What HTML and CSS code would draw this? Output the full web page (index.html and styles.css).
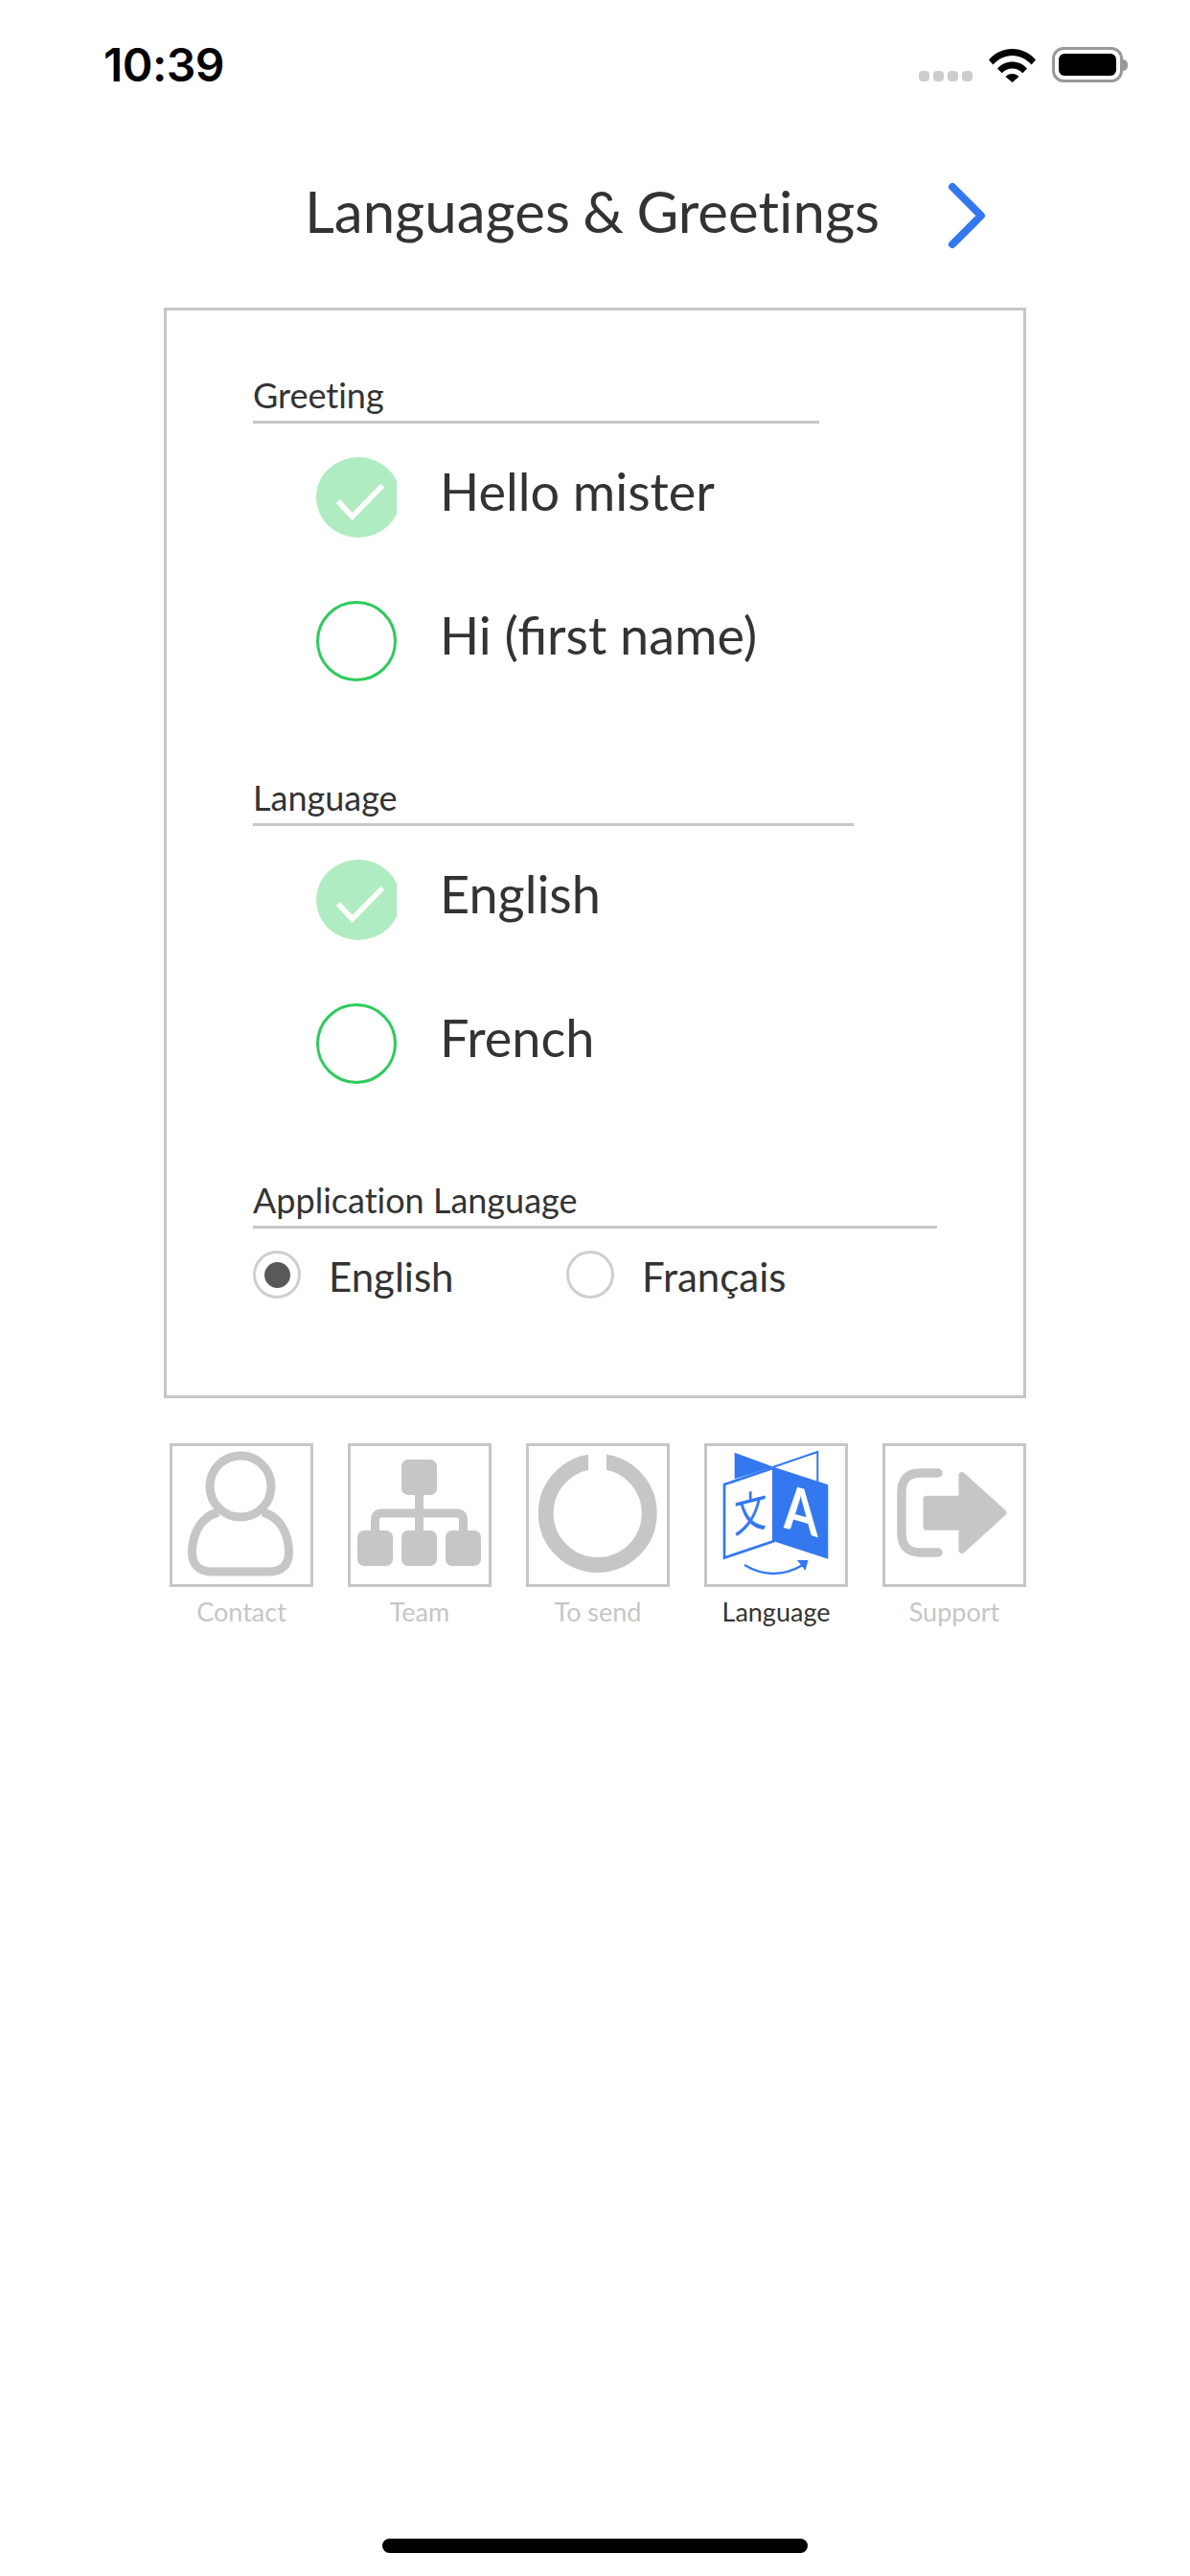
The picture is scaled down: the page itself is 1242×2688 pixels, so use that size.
FILE: index.html
```html
<!DOCTYPE html>
<html lang="en">
<head>
<meta charset="utf-8">
<title>Languages &amp; Greetings</title>
<link rel="stylesheet" href="styles.css">
</head>
<body>
<div class="screen">
  <header class="status">
    <span class="time">10:39</span>
    <div class="status-icons">
      <div class="signal"><i></i><i></i><i></i><i></i></div>
      <svg class="wifi" width="49" height="36" viewBox="0 0 49 36"><path d="M0 12.500C6.500 5 15 1 24.500 1S42.500 5 49 12.500L44.500 17.500C39 11.500 32 8 24.500 8S10 11.500 4.500 17.500Z"/><path d="M9 21.500C13 17 18.500 14.500 24.500 14.500S36 17 40 21.500L35.300 26.300C32.500 23.300 28.700 21.500 24.500 21.500S16.500 23.300 13.700 26.300Z"/><path d="M17.500 30C19.300 28.200 21.800 27 24.500 27S29.700 28.200 31.500 30L24.500 36Z"/></svg>
      <div class="battery"><div class="battery-level"></div></div>
    </div>
  </header>

  <div class="title-row">
    <h1 class="title">Languages &amp; Greetings</h1>
    <svg class="chevron" width="46" height="70" viewBox="0 0 46 70"><path d="M8 5L38 35L8 65" /></svg>
  </div>

  <main class="card">
    <section class="group">
      <h2 class="group-label rule-greeting">Greeting</h2>
      <div class="option">
        <svg class="check" width="84" height="84" viewBox="0 0 84 84"><ellipse class="check-disc" cx="44" cy="42" rx="44" ry="42"/><path class="check-mark" d="M22.700 46L37.700 62L69.300 29.700"/></svg>
        <span class="option-text">Hello mister</span>
      </div>
      <div class="option">
        <span class="ring"></span>
        <span class="option-text">Hi (first name)</span>
      </div>
    </section>
    <section class="group">
      <h2 class="group-label rule-language">Language</h2>
      <div class="option">
        <svg class="check" width="84" height="84" viewBox="0 0 84 84"><ellipse class="check-disc" cx="44" cy="42" rx="44" ry="42"/><path class="check-mark" d="M22.700 46L37.700 62L69.300 29.700"/></svg>
        <span class="option-text">English</span>
      </div>
      <div class="option">
        <span class="ring"></span>
        <span class="option-text">French</span>
      </div>
    </section>
    <section class="group-app">
      <h2 class="group-label rule-app">Application Language</h2>
      <div class="radios">
        <div class="radio-item radio-item-first"><span class="radio radio-on"></span><span class="radio-text">English</span></div>
        <div class="radio-item"><span class="radio"></span><span class="radio-text">Français</span></div>
      </div>
    </section>
  </main>

  <nav class="tabs">
    <div class="tab">
      <div class="tab-box">
        <svg class="tab-icon" viewBox="0 0 144 144"><g class="gray-stroke"><circle cx="71" cy="42" r="32"/><path d="M48 69C31 73 20.500 90 20.500 111C20.500 124 28 131 41 131H101C114 131 121.500 124 121.500 111C121.500 90 111 73 94 69"/></g></svg>
      </div>
      <span class="tab-label">Contact</span>
    </div>
    <div class="tab">
      <div class="tab-box">
        <svg class="tab-icon" viewBox="0 0 144 144"><g class="gray-fill"><rect x="53" y="14" width="37" height="37" rx="7"/><rect x="7" y="88" width="37" height="37" rx="7"/><rect x="53" y="88" width="37" height="37" rx="7"/><rect x="99" y="88" width="37" height="37" rx="7"/></g><path class="gray-stroke" d="M25.500 90V77Q25.500 70 32.500 70H110.500Q117.500 70 117.500 77V90M71.500 50V90"/></svg>
      </div>
      <span class="tab-label">Team</span>
    </div>
    <div class="tab">
      <div class="tab-box">
        <svg class="tab-icon" viewBox="0 0 144 144"><circle class="ring-icon" cx="71.700" cy="70" r="54"/><rect class="ring-gap" x="62" y="2" width="19" height="32"/></svg>
      </div>
      <span class="tab-label">To send</span>
    </div>
    <div class="tab tab-active">
      <div class="tab-box">
        <svg class="tab-icon" viewBox="0 0 144 144">
          <path class="blue-fill" d="M28.700 6.700L69.300 21.700L28.700 34.300Z"/>
          <path class="blue-thin" d="M69.300 21.700L115.300 6V38"/>
          <path class="blue-line" d="M18 40L69.300 22.700V99.300L18 116.500Z"/>
          <path class="blue-fill" d="M69.300 21.700L126.300 40.300V117.700L69.300 99.300Z"/>
          <text class="glyph-cjk" transform="translate(28 91) skewY(-14) scale(.95 1.300)" x="0" y="0">文</text>
          <text class="glyph-a" transform="translate(80 85) skewY(16) scale(.8 1)" x="0" y="0">A</text>
          <path class="blue-arrow" d="M39 124Q69 142 100 124"/>
          <path class="blue-fill" d="M94 119L105.500 119L102.500 130Z"/>
        </svg>
      </div>
      <span class="tab-label">Language</span>
    </div>
    <div class="tab">
      <div class="tab-box">
        <svg class="tab-icon" viewBox="0 0 144 144"><path class="bracket" d="M55 28H37Q17 28 17 48V91Q17 111 37 111H55"/><path class="support-arrow" d="M43 55.200H80V30.500L123 69.500L80 108.500V84.200H43Z"/></svg>
      </div>
      <span class="tab-label">Support</span>
    </div>
  </nav>

  <div class="home-bar"></div>
</div>
</body>
</html>
```

FILE: styles.css
```css
* { box-sizing: border-box; }
html, body { margin: 0; padding: 0; background: #fff; }
body { font-family: "Lato", "Noto Sans", sans-serif; color: #333; }
.screen { width: 1242px; height: 2688px; display: flex; flex-direction: column; }

.status { height: 190px; padding: 44px 70px 0 108px; display: flex; justify-content: space-between; align-items: flex-start; flex: none; }
.time { font-family: "Inter", "Liberation Sans", sans-serif; font-weight: 600; font-size: 48px; line-height: 48px; color: #000; letter-spacing: -0.5px; }
.status-icons { display: flex; align-items: flex-start; padding-top: 5px; }
.signal { display: flex; gap: 4px; margin-top: 25px; margin-right: 17px; }
.signal i { display: block; width: 11px; height: 11px; border-radius: 4px; background: #cdcdcd; }
.wifi { display: block; margin-top: 1px; fill: #000; margin-right: 17px; }
.battery { position: relative; width: 74px; height: 37px; border: 3px solid #999; border-radius: 12px; padding: 4px; }
.battery::after { content: ""; position: absolute; right: -8px; top: 10px; width: 5px; height: 12px; background: #999; border-radius: 0 6px 6px 0; }
.battery-level { width: 100%; height: 100%; background: #000; border-radius: 6px; }

.title-row { height: 70px; padding-left: 318px; display: flex; align-items: center; flex: none; }
.title { margin: 0; padding-bottom: 10px; font-size: 60px; line-height: 70px; font-weight: 400; font-variant-ligatures: none; word-spacing: -2px; color: #333; width: 668px; white-space: nowrap; }
.chevron { display: block; fill: none; stroke: #3478f0; stroke-width: 8; stroke-linecap: round; stroke-linejoin: round; }

.card { width: 900px; height: 1138px; margin: 61px 0 0 171px; padding: 0 90px; border: 3px solid #c6c6c6; flex: none; }
.group { height: 420px; padding-top: 68px; }
.group-app { padding-top: 68px; }
.group-label { margin: 0; padding-bottom: 7px; font-size: 36px; line-height: 40px; font-weight: 400; font-variant-ligatures: none; color: #333; border-bottom: 3px solid #c6c6c6; }
.rule-greeting { width: 591px; }
.rule-language { width: 627px; }
.rule-app { width: 714px; }
.option { display: flex; align-items: center; height: 84px; margin-top: 35px; }
.option + .option { margin-top: 66px; }
.option-text { font-size: 54px; line-height: 84px; margin-left: 45px; padding-bottom: 12px; color: #333; }
.check { display: block; flex: none; margin-left: 66px; }
.check-disc { fill: #b0ecc1; }
.check-mark { fill: none; stroke: #fff; stroke-width: 5.500; }
.ring { display: block; flex: none; width: 84px; height: 84px; margin-left: 66px; border: 3px solid #2ecb5c; border-radius: 50%; }
.radios { display: flex; margin-top: 23px; }
.radio-item { display: flex; align-items: center; height: 50px; }
.radio-item-first { width: 327px; }
.radio { display: flex; align-items: center; justify-content: center; flex: none; width: 50px; height: 50px; border: 3px solid #cfcfcf; border-radius: 50%; }
.radio-on::after { content: ""; display: block; width: 27px; height: 27px; border-radius: 50%; background: #595959; }
.radio-text { font-size: 42px; line-height: 50px; margin-left: 29px; padding-top: 3px; color: #333; }

.tabs { display: flex; gap: 36px; margin: 47px 0 0 177px; flex: none; }
.tab { width: 150px; display: flex; flex-direction: column; align-items: center; }
.tab-box { width: 150px; height: 150px; border: 3px solid #c6c6c6; }
.tab-icon { display: block; width: 144px; height: 144px; }
.tab-label { font-size: 27px; line-height: 32px; margin-top: 10px; color: #c6c6c6; white-space: nowrap; }
.tab-active .tab-label { color: #333; }
.gray-stroke { fill: none; stroke: #c6c6c6; stroke-width: 9; }
.gray-fill { fill: #c6c6c6; }
.ring-icon { fill: none; stroke: #c6c6c6; stroke-width: 16; }
.ring-gap { fill: #fff; }
.bracket { fill: none; stroke: #c6c6c6; stroke-width: 9.500; stroke-linecap: round; }
.support-arrow { fill: #c6c6c6; stroke: #c6c6c6; stroke-width: 7; stroke-linejoin: round; }
.blue-fill { fill: #3478f0; }
.blue-line { fill: #fff; stroke: #3478f0; stroke-width: 2.700; }
.blue-thin { fill: none; stroke: #3478f0; stroke-width: 2; }
.blue-arrow { fill: none; stroke: #3478f0; stroke-width: 2.500; }
.glyph-cjk { font-family: "Noto Sans CJK JP", sans-serif; font-size: 36px; fill: #3478f0; }
.glyph-a { font-family: "Lato", sans-serif; font-weight: 700; font-size: 64px; fill: #fff; }

.home-bar { width: 444px; height: 15px; margin: auto 0 24px 399px; border-radius: 8px; background: #000; flex: none; }
```
